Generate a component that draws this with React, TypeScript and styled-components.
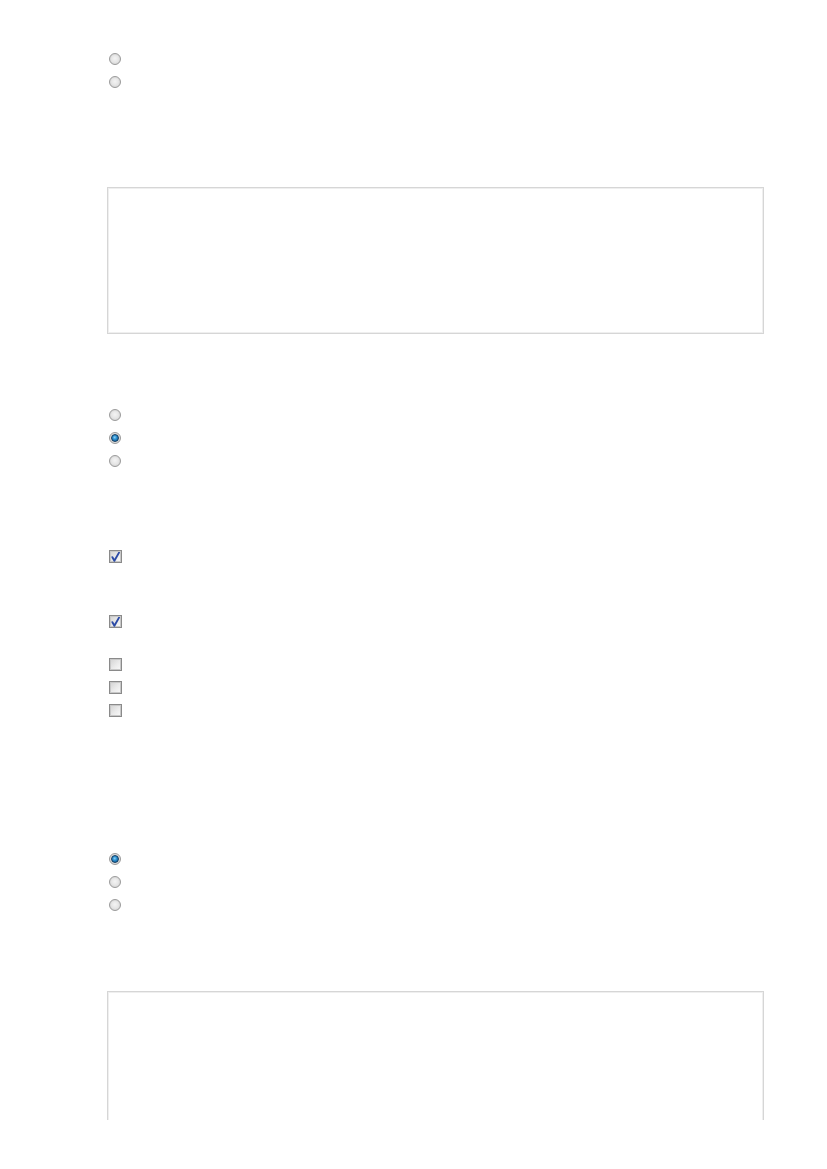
import React from "react";
import styled, { createGlobalStyle } from "styled-components";

const GlobalStyle = createGlobalStyle`
  body {
    margin: 0;
    background: #fff;
    font-family: "Liberation Sans", Arial, sans-serif;
    font-size: 13px;
    color: #fff;
  }
`;

const Page = styled.div`
  height: 1120px;
  overflow: hidden;
  padding: 47px 0 0 107px;
  box-sizing: border-box;
`;

const Group = styled.div<{ $gap: number }>`
  margin-top: ${(p) => p.$gap}px;
  display: flex;
  flex-direction: column;
`;

const Row = styled.label`
  display: flex;
  align-items: center;
  height: 23px;
  gap: 6px;
`;

const Radio = styled.span<{ $checked?: boolean }>`
  position: relative;
  margin-left: 2px;
  width: 12px;
  height: 12px;
  border-radius: 50%;
  box-sizing: border-box;
  border: 1px solid #9a9a9a;
  background: radial-gradient(circle at 50% 45%, #f4f4f4 0%, #e4e4e4 55%, #c9c9c9 100%);
  box-shadow: inset 0 0 0 1px #dcdcdc;

  &::after {
    content: "";
    display: ${(p) => (p.$checked ? "block" : "none")};
    position: absolute;
    left: 1px;
    top: 1px;
    width: 8px;
    height: 8px;
    border-radius: 50%;
    box-sizing: border-box;
    border: 1px solid #123a5e;
    background: radial-gradient(circle at 45% 40%, #8fd3f7 0%, #2a8fd0 40%, #0c5288 100%);
  }
`;

const Check = styled.span`
  margin-left: 2px;
  width: 13px;
  height: 13px;
  box-sizing: border-box;
  border: 1px solid #8a8a8a;
  background: linear-gradient(135deg, #d2d2d2 0%, #ebebeb 55%, #fafafa 100%);
  box-shadow: inset 0 0 0 1px #c8c8c8;
  display: flex;
  align-items: center;
  justify-content: center;
`;

const Box = styled.div<{ $gap: number; $height: number }>`
  margin-top: ${(p) => p.$gap}px;
  width: 657px;
  height: ${(p) => p.$height}px;
  box-sizing: border-box;
  border: 1px solid #d6d6d6;
  box-shadow: inset 0 0 0 1px #efefef;
  background: #fff;
`;

const Tick = () => (
  <svg width="9" height="10" viewBox="0 0 9 10">
    <path d="M1.4 5.2 L3.4 8.8 L8 0.6" fill="none" stroke="#2b4aa6" strokeWidth="1.9" strokeLinecap="round" strokeLinejoin="round" />
  </svg>
);

const RadioRow = ({ checked }: { checked?: boolean }) => (
  <Row>
    <Radio $checked={checked} />
  </Row>
);

const CheckRow = ({ checked }: { checked?: boolean }) => (
  <Row>
    <Check>{checked && <Tick />}</Check>
  </Row>
);

export default function App() {
  return (
    <>
      <GlobalStyle />
      <Page>
        <Group $gap={0}>
          <RadioRow />
          <RadioRow />
        </Group>
        <Box $gap={94} $height={147} />
        <Group $gap={69}>
          <RadioRow />
          <RadioRow checked />
          <RadioRow />
        </Group>
        <Group $gap={73}>
          <CheckRow checked />
        </Group>
        <Group $gap={42}>
          <CheckRow checked />
        </Group>
        <Group $gap={20}>
          <CheckRow />
          <CheckRow />
          <CheckRow />
        </Group>
        <Group $gap={125}>
          <RadioRow checked />
          <RadioRow />
          <RadioRow />
        </Group>
        <Box $gap={75} $height={200} />
      </Page>
    </>
  );
}
